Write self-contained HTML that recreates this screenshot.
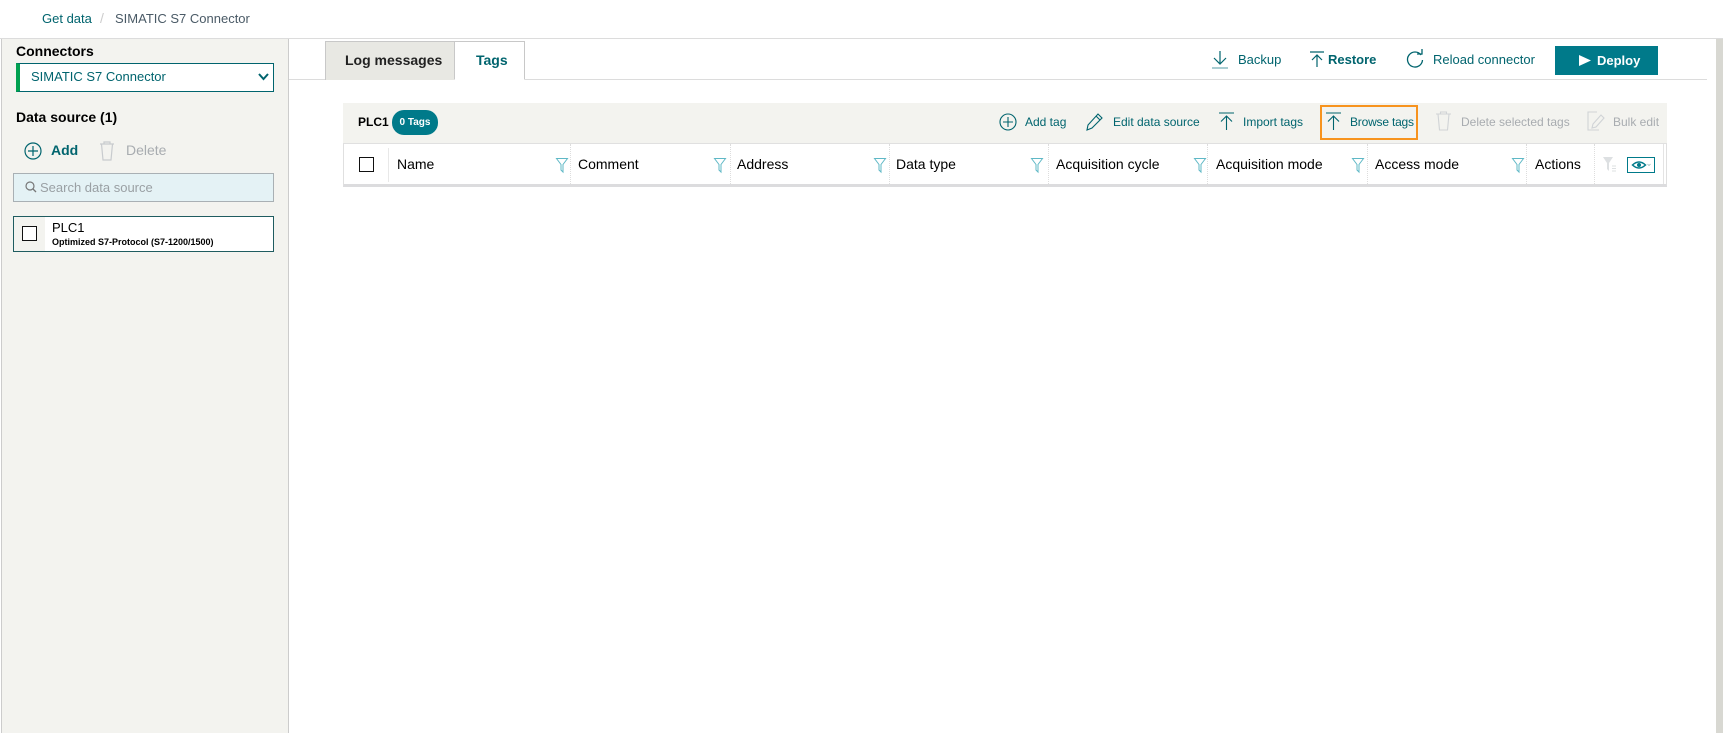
<!DOCTYPE html>
<html><head><meta charset="utf-8"><style>
*{box-sizing:border-box;margin:0;padding:0}
body{width:1723px;height:733px;overflow:hidden;background:#fff;font-family:"Liberation Sans",sans-serif;color:#000;position:relative}
.a{position:absolute;white-space:nowrap}
.t{color:#00646e}
.g{color:#a8acb0}
svg{position:absolute;overflow:visible}
</style></head><body>
<!-- top bar -->
<div class="a" style="left:0;top:0;width:1723px;height:39px;border-bottom:1px solid #dcdcdc"></div>
<div class="a t" style="left:42px;top:11px;font-size:13px">Get data</div>
<div class="a" style="left:100px;top:10px;font-size:14px;color:#ccc">/</div>
<div class="a" style="left:115px;top:11px;font-size:13px;color:#4a5a66">SIMATIC S7 Connector</div>
<!-- sidebar -->
<div class="a" style="left:1px;top:39px;width:288px;height:694px;background:#f3f3ef;border-left:1px solid #ccc;border-right:1px solid #ccc"></div>
<div class="a" style="left:16px;top:43px;font-size:14px;font-weight:bold">Connectors</div>
<div class="a" style="left:16px;top:63px;width:258px;height:29px;background:#fff;border:1px solid #00646e;border-left:4px solid #00a050"></div>
<div class="a t" style="left:31px;top:69px;font-size:13px">SIMATIC S7 Connector</div>
<svg style="left:258px;top:73px" width="11" height="8"><path d="M1 1L5.5 6L10 1" fill="none" stroke="#00646e" stroke-width="2"/></svg>
<div class="a" style="left:16px;top:109px;font-size:14px;font-weight:bold">Data source (1)</div>
<svg style="left:24px;top:142px" width="18" height="18"><circle cx="9" cy="9" r="8" fill="none" stroke="#00646e" stroke-width="1.2"/><path d="M9 4V14M4 9H14" stroke="#00646e" stroke-width="1.2"/></svg>
<div class="a t" style="left:51px;top:142px;font-size:14px;font-weight:bold">Add</div>
<svg style="left:99px;top:141px" width="16" height="20"><path d="M1 3H15M5 3V1H11V3M2.5 3L4 19H12L13.5 3" fill="none" stroke="#c8cbce" stroke-width="1.2"/></svg>
<div class="a g" style="left:126px;top:142px;font-size:14px">Delete</div>
<div class="a" style="left:13px;top:173px;width:261px;height:29px;background:#e4f2f5;border:1px solid #a9b0b4"></div>
<svg style="left:25px;top:181px" width="12" height="12"><circle cx="5" cy="5" r="4" fill="none" stroke="#777" stroke-width="1.2"/><path d="M8 8L11 11" stroke="#777" stroke-width="1.3"/></svg>
<div class="a" style="left:40px;top:180px;font-size:13px;color:#9aa0a4">Search data source</div>
<div class="a" style="left:13px;top:216px;width:261px;height:36px;background:#fff;border:1px solid #1f5c60"></div>
<div class="a" style="left:14px;top:217px;width:31px;height:34px;background:#f3f3ef"></div>
<div class="a" style="left:22px;top:226px;width:15px;height:15px;border:1.5px solid #111;background:#fff"></div>
<div class="a" style="left:52px;top:220px;font-size:13px">PLC1</div>
<div class="a" style="left:52px;top:237px;font-size:9px;font-weight:bold">Optimized S7-Protocol (S7-1200/1500)</div>
<!-- tabs -->
<div class="a" style="left:289px;top:79px;width:1418px;height:1px;background:#dcdcdc"></div>
<div class="a" style="left:325px;top:41px;width:130px;height:39px;background:#e8e8e3;border:1px solid #c8c8c8;border-bottom:none"></div>
<div class="a" style="left:345px;top:52px;font-size:14px;font-weight:bold;color:#222">Log messages</div>
<div class="a" style="left:454px;top:41px;width:71px;height:39px;background:#fff;border:1px solid #c8c8c8;border-bottom:1px solid #fff"></div>
<div class="a t" style="left:476px;top:52px;font-size:14px;font-weight:bold">Tags</div>
<!-- right toolbar -->
<svg style="left:1211px;top:50px" width="18" height="19"><path d="M9 1V13M3 8L9 14L15 8" fill="none" stroke="#00646e" stroke-width="1.2"/><path d="M1 18H17" stroke="#8cbcc2" stroke-width="1.5"/></svg>
<div class="a t" style="left:1238px;top:52px;font-size:13px">Backup</div>
<svg style="left:1309px;top:51px" width="16" height="17"><path d="M1 1H15M8 4V16M3 9L8 4L13 9" fill="none" stroke="#00646e" stroke-width="1.2"/></svg>
<div class="a t" style="left:1328px;top:52px;font-size:13px;font-weight:bold">Restore</div>
<svg style="left:1406px;top:50px" width="18" height="18"><path d="M15 5A7.5 7.5 0 1 0 16.5 10" fill="none" stroke="#00646e" stroke-width="1.3"/><path d="M11 4H16V-1" fill="none" stroke="#00646e" stroke-width="1.3"/></svg>
<div class="a t" style="left:1433px;top:52px;font-size:13px">Reload connector</div>
<div class="a" style="left:1555px;top:46px;width:103px;height:29px;background:#007a8a"></div>
<svg style="left:1579px;top:55px" width="12" height="11"><path d="M0 0L12 5.5L0 11Z" fill="#fff"/></svg>
<div class="a" style="left:1597px;top:53px;font-size:13px;font-weight:bold;color:#fff">Deploy</div>
<!-- scrollbar -->
<div class="a" style="left:1716px;top:39px;width:7px;height:694px;background:#d8d8d2"></div>
<!-- tag toolbar -->
<div class="a" style="left:343px;top:103px;width:1324px;height:40px;background:#f3f3ef"></div>
<div class="a" style="left:358px;top:115px;font-size:12px;font-weight:bold">PLC1</div>
<div class="a" style="left:392px;top:110px;width:46px;height:25px;border-radius:12px;background:#007a8a;color:#fff;font-size:10px;font-weight:bold;display:flex;align-items:center;justify-content:center">0 Tags</div>
<svg style="left:999px;top:113px" width="18" height="18"><circle cx="9" cy="9" r="8" fill="none" stroke="#00646e" stroke-width="1.1"/><path d="M9 4V14M4 9H14" stroke="#00646e" stroke-width="1.1"/></svg>
<div class="a t" style="left:1025px;top:115px;font-size:12px">Add tag</div>
<svg style="left:1085px;top:112px" width="18" height="19"><path d="M2 18L3 13L13 2L17 6L7 16Z M11 4L15 8" fill="none" stroke="#00646e" stroke-width="1.1"/></svg>
<div class="a t" style="left:1113px;top:115px;font-size:12px">Edit data source</div>
<svg style="left:1218px;top:112px" width="17" height="19"><path d="M1 1H16M8.5 4V18M3 9.5L8.5 4L14 9.5" fill="none" stroke="#00646e" stroke-width="1.1"/></svg>
<div class="a t" style="left:1243px;top:115px;font-size:12px">Import tags</div>
<div class="a" style="left:1320px;top:105px;width:98px;height:35px;border:2.5px solid #f7931e"></div>
<svg style="left:1325px;top:112px" width="17" height="19"><path d="M1 1H16M8.5 4V18M3 9.5L8.5 4L14 9.5" fill="none" stroke="#00646e" stroke-width="1.1"/></svg>
<div class="a t" style="left:1350px;top:115px;font-size:12px;letter-spacing:-0.2px">Browse tags</div>
<svg style="left:1436px;top:111px" width="15" height="20"><path d="M0 3H15M4.5 3V1H10.5V3M2 3L3.5 19H11.5L13 3" fill="none" stroke="#d0d3d6" stroke-width="1.1"/></svg>
<div class="a g" style="left:1461px;top:115px;font-size:12px">Delete selected tags</div>
<svg style="left:1587px;top:111px" width="18" height="20"><path d="M10 1H1V19H12M5 17L6 13L14 4L17 7L9 16Z" fill="none" stroke="#d0d3d6" stroke-width="1.1"/></svg>
<div class="a g" style="left:1613px;top:115px;font-size:12px">Bulk edit</div>
<!-- header row -->
<div class="a" style="left:343px;top:143px;width:1324px;height:44px;background:#fff;border:1px solid #e0e0e0;border-bottom:3px solid #dcdcde"></div>
<div class="a" style="left:359px;top:157px;width:15px;height:15px;border:1.5px solid #111"></div>
<div class="a" style="left:388px;top:148px;width:1px;height:34px;background:#e8e8e8"></div>
<div class="a" style="left:397px;top:156px;font-size:14px">Name</div>
<div class="a" style="left:578px;top:156px;font-size:14px">Comment</div>
<div class="a" style="left:737px;top:156px;font-size:14px">Address</div>
<div class="a" style="left:896px;top:156px;font-size:14px">Data type</div>
<div class="a" style="left:1056px;top:156px;font-size:14px">Acquisition cycle</div>
<div class="a" style="left:1216px;top:156px;font-size:14px">Acquisition mode</div>
<div class="a" style="left:1375px;top:156px;font-size:14px">Access mode</div>
<div class="a" style="left:1535px;top:156px;font-size:14px">Actions</div>
<div class="a" style="left:570px;top:144px;height:40px;border-left:1px dotted #ddd"></div>
<div class="a" style="left:730px;top:144px;height:40px;border-left:1px dotted #ddd"></div>
<div class="a" style="left:889px;top:144px;height:40px;border-left:1px dotted #ddd"></div>
<div class="a" style="left:1048px;top:144px;height:40px;border-left:1px dotted #ddd"></div>
<div class="a" style="left:1207px;top:144px;height:40px;border-left:1px dotted #ddd"></div>
<div class="a" style="left:1367px;top:144px;height:40px;border-left:1px dotted #ddd"></div>
<div class="a" style="left:1526px;top:144px;height:40px;border-left:1px dotted #ddd"></div>
<div class="a" style="left:1594px;top:144px;height:40px;border-left:1px dotted #ddd"></div>
<div class="a" style="left:1663px;top:144px;height:40px;border-left:1px solid #e4e4e4"></div>
<svg style="left:556px;top:158px" width="12" height="15"><path d="M0.5 0.5H11.5L7 6.5V14L5 12V6.5Z" fill="none" stroke="#5fb8c6" stroke-width="1"/></svg>
<svg style="left:714px;top:158px" width="12" height="15"><path d="M0.5 0.5H11.5L7 6.5V14L5 12V6.5Z" fill="none" stroke="#5fb8c6" stroke-width="1"/></svg>
<svg style="left:874px;top:158px" width="12" height="15"><path d="M0.5 0.5H11.5L7 6.5V14L5 12V6.5Z" fill="none" stroke="#5fb8c6" stroke-width="1"/></svg>
<svg style="left:1031px;top:158px" width="12" height="15"><path d="M0.5 0.5H11.5L7 6.5V14L5 12V6.5Z" fill="none" stroke="#5fb8c6" stroke-width="1"/></svg>
<svg style="left:1194px;top:158px" width="12" height="15"><path d="M0.5 0.5H11.5L7 6.5V14L5 12V6.5Z" fill="none" stroke="#5fb8c6" stroke-width="1"/></svg>
<svg style="left:1352px;top:158px" width="12" height="15"><path d="M0.5 0.5H11.5L7 6.5V14L5 12V6.5Z" fill="none" stroke="#5fb8c6" stroke-width="1"/></svg>
<svg style="left:1512px;top:158px" width="12" height="15"><path d="M0.5 0.5H11.5L7 6.5V14L5 12V6.5Z" fill="none" stroke="#5fb8c6" stroke-width="1"/></svg>
<svg style="left:1603px;top:157px" width="14" height="15"><path d="M0 0H10L6 6V14L4 12V6Z" fill="#dde0e2"/><path d="M9 9H13M9 11.5H13M9 14H13" stroke="#dde0e2" stroke-width="1"/></svg>
<div class="a" style="left:1627px;top:157px;width:28px;height:16px;border:1.5px solid #007a8a"></div>
<svg style="left:1632px;top:160px" width="20" height="10"><path d="M0.5 5Q7 -1 13.5 5Q7 11 0.5 5Z" fill="none" stroke="#007a8a" stroke-width="1.5"/><circle cx="7" cy="5" r="2" fill="#007a8a"/><path d="M15.5 4L17 5.5L18.5 4" fill="none" stroke="#9bb" stroke-width="0.8"/></svg>
</body></html>
